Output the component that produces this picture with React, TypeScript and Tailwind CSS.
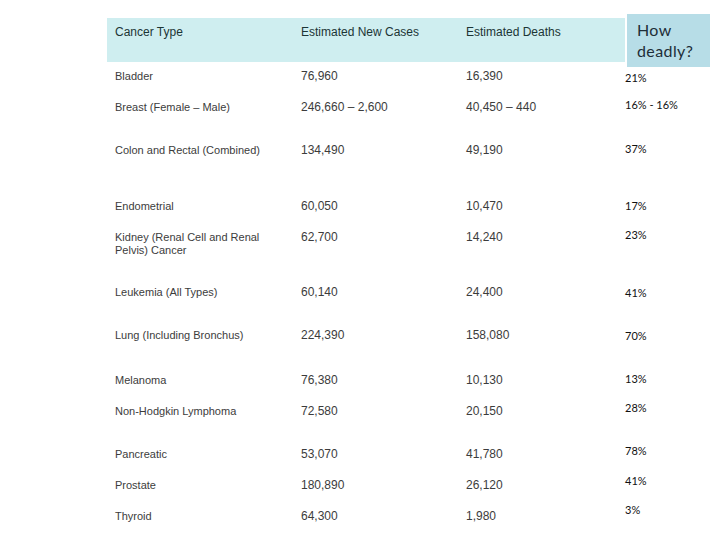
import React from 'react';

type Row = {
  name: string[];
  cases: string;
  deaths: string;
  pct: string;
  h: string;
  pctMt: string;
};

const rows: Row[] = [
  { name: ['Bladder'], cases: '76,960', deaths: '16,390', pct: '21%', h: 'h-[31px]', pctMt: 'mt-[1px]' },
  { name: ['Breast (Female – Male)'], cases: '246,660 – 2,600', deaths: '40,450 – 440', pct: '16% - 16%', h: 'h-[43px]', pctMt: '-mt-[3px]' },
  { name: ['Colon and Rectal (Combined)'], cases: '134,490', deaths: '49,190', pct: '37%', h: 'h-[56px]', pctMt: '-mt-[2px]' },
  { name: ['Endometrial'], cases: '60,050', deaths: '10,470', pct: '17%', h: 'h-[31px]', pctMt: '-mt-[1px]' },
  { name: ['Kidney (Renal Cell and Renal', 'Pelvis) Cancer'], cases: '62,700', deaths: '14,240', pct: '23%', h: 'h-[55px]', pctMt: '-mt-[3px]' },
  { name: ['Leukemia (All Types)'], cases: '60,140', deaths: '24,400', pct: '41%', h: 'h-[43px]', pctMt: 'mt-[0px]' },
  { name: ['Lung (Including Bronchus)'], cases: '224,390', deaths: '158,080', pct: '70%', h: 'h-[45px]', pctMt: 'mt-[0px]' },
  { name: ['Melanoma'], cases: '76,380', deaths: '10,130', pct: '13%', h: 'h-[31px]', pctMt: '-mt-[2px]' },
  { name: ['Non-Hodgkin Lymphoma'], cases: '72,580', deaths: '20,150', pct: '28%', h: 'h-[43px]', pctMt: '-mt-[4px]' },
  { name: ['Pancreatic'], cases: '53,070', deaths: '41,780', pct: '78%', h: 'h-[31px]', pctMt: '-mt-[4px]' },
  { name: ['Prostate'], cases: '180,890', deaths: '26,120', pct: '41%', h: 'h-[31px]', pctMt: '-mt-[5px]' },
  { name: ['Thyroid'], cases: '64,300', deaths: '1,980', pct: '3%', h: 'h-[31px]', pctMt: '-mt-[7px]' },
];

export default function App() {
  return (
    <div className="h-[540px] w-[720px] overflow-hidden bg-white font-['Liberation_Sans',Arial,sans-serif]">
      {/* Header */}
      <div className="flex items-start gap-[2px] pl-[107px] pt-[14px]">
        <div className="mt-[4px] flex h-[44px] w-[518px] bg-[#cfeef0] pl-[8px] pt-[7px] text-[12px] leading-[14px] text-[#1c3535]">
          <div className="w-[186px]">Cancer Type</div>
          <div className="w-[165px]">Estimated New Cases</div>
          <div>Estimated Deaths</div>
        </div>
        <div className="h-[53px] w-[83px] bg-[#b7dde7] pl-[10px] pt-[5px] font-['Lato','Open_Sans',sans-serif] text-[16px] leading-[21px] tracking-[0.4px] text-[#1e2e38]">
          How
          <br />
          deadly?
        </div>
      </div>

      {/* Rows */}
      <div className="mt-[2.5px] pl-[115px]">
        {rows.map((r) => (
          <div key={r.name[0]} className={`flex items-start ${r.h}`}>
            <div className="w-[186px] text-[11px] leading-[13px] text-[#3c3c3c]">
              {r.name.map((n) => (
                <div key={n}>{n}</div>
              ))}
            </div>
            <div className="w-[165px] text-[12px] leading-[13px] text-[#3c3c3c]">{r.cases}</div>
            <div className="w-[159px] text-[12px] leading-[13px] text-[#3c3c3c]">{r.deaths}</div>
            <div className={`${r.pctMt} font-['Lato','Open_Sans',sans-serif] text-[11px] leading-[13px] text-[#111]`}>
              {r.pct}
            </div>
          </div>
        ))}
      </div>
    </div>
  );
}
